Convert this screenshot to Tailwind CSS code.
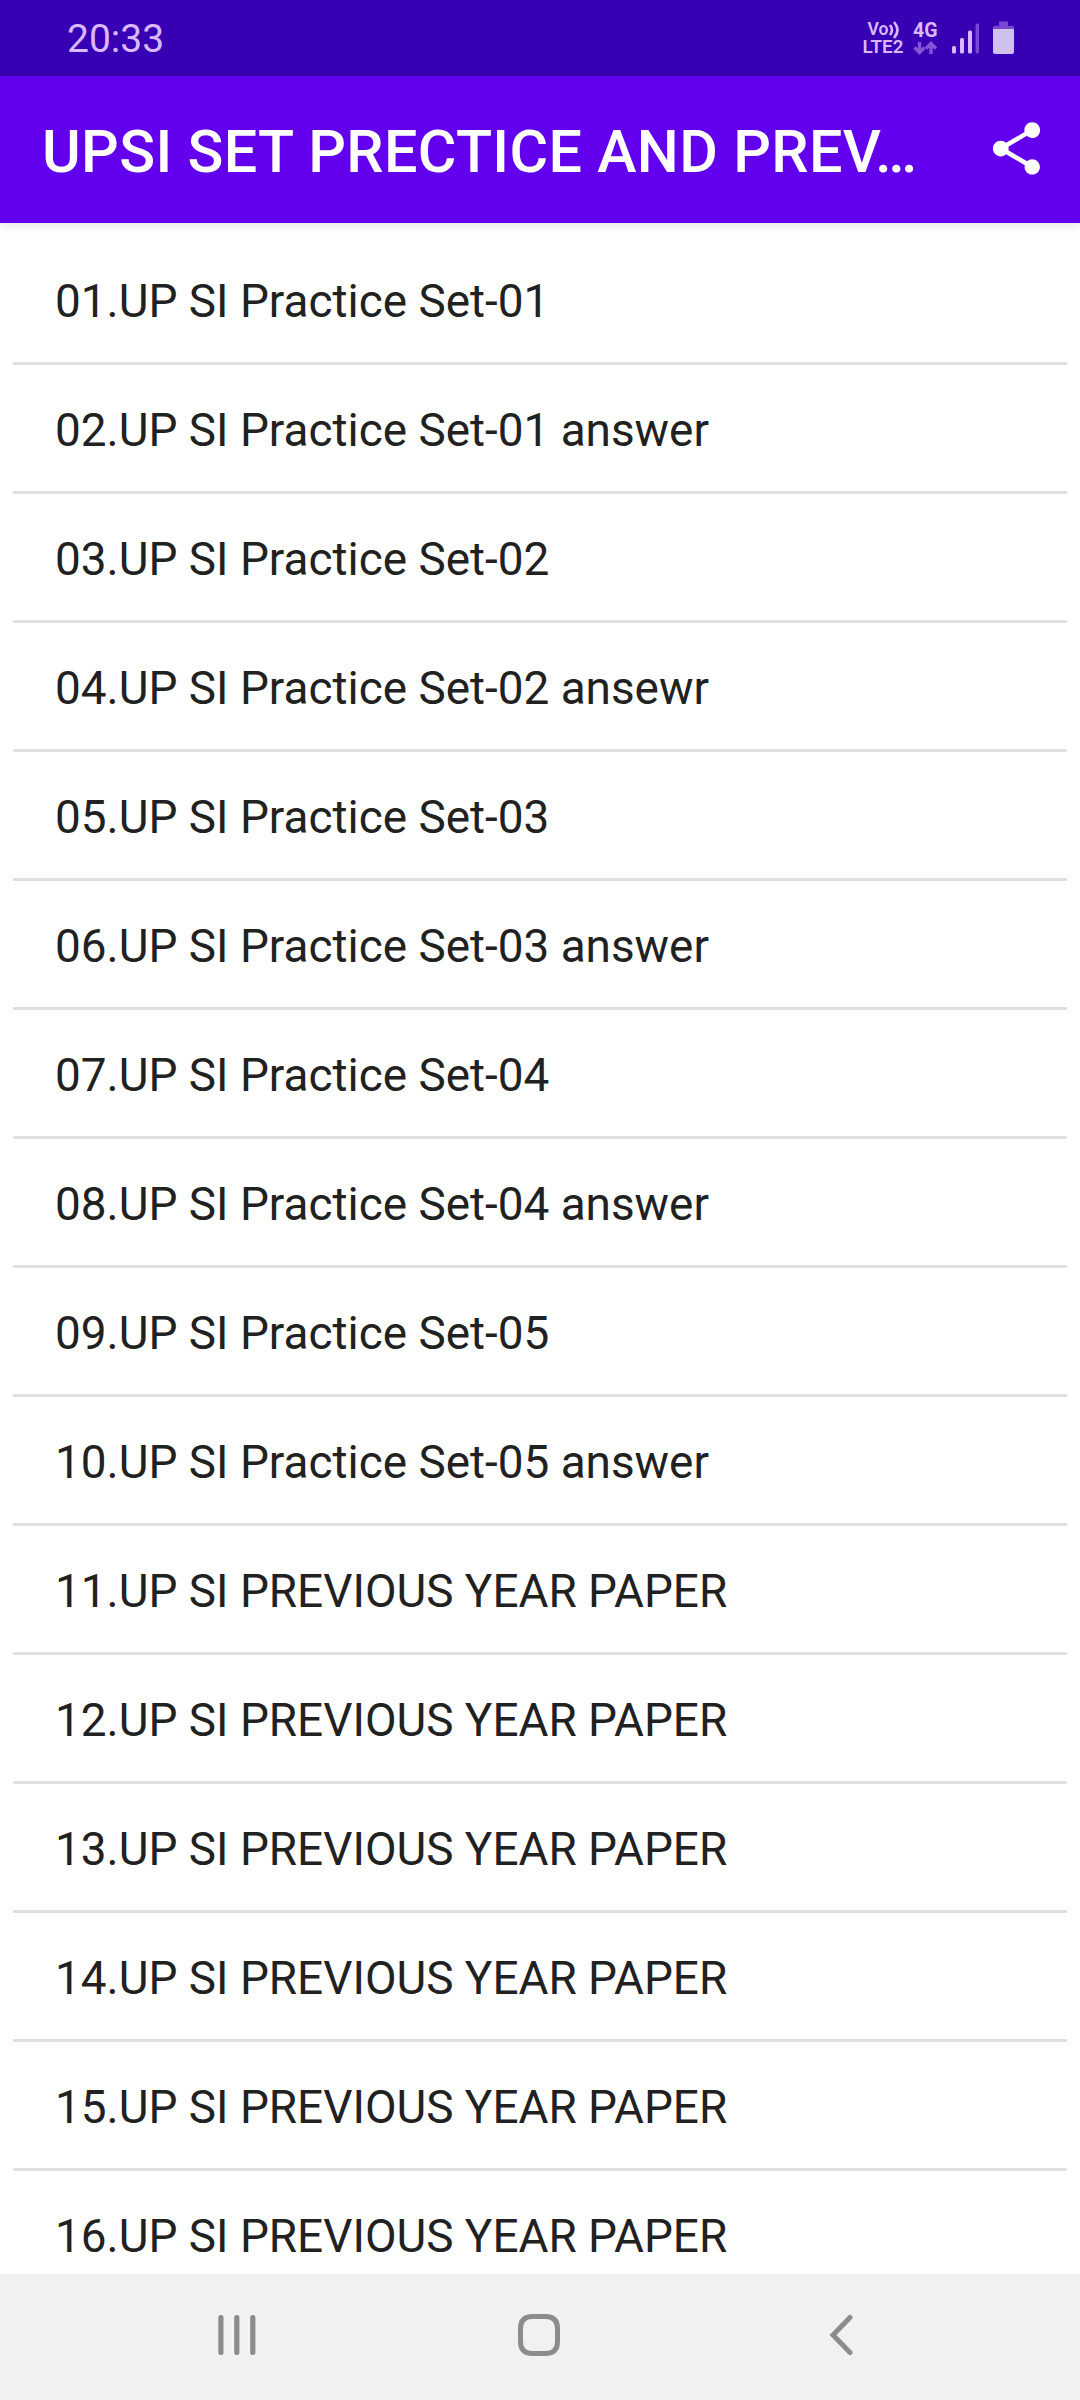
<!DOCTYPE html>
<html lang="en">
  <head>
    <meta charset="UTF-8" />
    <title>UPSI Set Practice</title>
    <meta name="viewport" content="width=device-width, initial-scale=1.0" />
    <script src="https://cdn.jsdelivr.net/npm/@tailwindcss/browser@4"></script>
  </head>
  <body class="bg-white font-['Roboto',sans-serif]">
    <div class="w-[1080px] h-[2400px] flex flex-col overflow-hidden">
      <!-- status bar -->
      <div class="h-[76px] shrink-0 bg-[#3700b3] text-[#d9b8ff] flex items-start justify-between pl-[67px] pr-[66px]">
        <span class="text-[39px] leading-[46px] pt-[16px]">20:33</span>
        <svg class="w-[152px] h-[76px]" viewBox="862 0 152 76" fill="#d9b8ff">
          <g font-family="Roboto, sans-serif" font-weight="700">
            <text x="867.5" y="35.3" font-size="18" font-weight="600" textLength="21" lengthAdjust="spacingAndGlyphs">Vo</text>
            <text x="862.5" y="53.2" font-size="18.5" font-weight="600" textLength="41" lengthAdjust="spacingAndGlyphs">LTE2</text>
            <text x="913" y="36.5" font-size="19.5" textLength="24.5" lengthAdjust="spacingAndGlyphs">4G</text>
          </g>
          <g fill="none" stroke="#d9b8ff" stroke-width="2.6">
            <path d="M890 25q4 5 0 10" />
            <path d="M894 22q7 8 0 16" />
          </g>
          <g fill="none" stroke="#8355d6" stroke-width="3.4">
            <path d="M919.5 42v10M914.5 47.5l5 5 5-5" />
            <path d="M931 54v-10M926 48.5l5-5 5 5" />
          </g>
          <rect x="952" y="46" width="4" height="7.5" rx="1.5" />
          <rect x="960" y="38" width="4" height="15.5" rx="1.5" />
          <rect x="968" y="30.5" width="4" height="23" rx="1.5" />
          <rect x="975.5" y="23.5" width="3.5" height="30" rx="1.5" fill="#7a48d0" />
          <path d="M999 26v-4.5h9V26h4.5q1.5 0 1.5 1.5V29h-21v-1.5q0-1.5 1.5-1.5z" fill="#7a48d0" />
          <path d="M993 29h21v23q0 2-2 2h-17q-2 0-2-2z" fill="#cfc0ec" />
        </svg>
      </div>

      <!-- app bar -->
      <header class="relative z-10 h-[147px] shrink-0 bg-[#6200ee] text-white flex items-center justify-between pl-[42px] pr-[32px] shadow-[0_2px_10px_rgba(0,0,0,0.12)]">
        <h1 class="text-[59.2px] leading-[68px] tracking-[0.35px] font-medium whitespace-nowrap pt-[4px]">UPSI SET PRECTICE AND PREV…</h1>
        <svg class="w-[63px] h-[63px] shrink-0 -mt-[2px]" viewBox="0 0 24 24" fill="currentColor">
          <path d="M18 16.08c-.76 0-1.44.3-1.96.77L8.91 12.7c.05-.23.09-.46.09-.7s-.04-.47-.09-.7l7.05-4.11c.54.5 1.25.81 2.04.81 1.66 0 3-1.34 3-3s-1.34-3-3-3-3 1.34-3 3c0 .24.04.47.09.7L8.04 9.81C7.5 9.31 6.79 9 6 9c-1.66 0-3 1.34-3 3s1.34 3 3 3c.79 0 1.5-.31 2.04-.81l7.12 4.16c-.05.21-.08.43-.08.65 0 1.61 1.31 2.92 2.92 2.92 1.61 0 2.92-1.31 2.92-2.92s-1.31-2.92-2.92-2.92z" />
        </svg>
      </header>

      <!-- paper list -->
      <main class="flex-1 min-h-0 overflow-hidden p-[13px] text-[45.9px] text-[#212121]">
        <ul id="list" class="divide-y-[3px] divide-[#e0e0e0]"></ul>
      </main>

      <!-- navigation bar -->
      <nav class="h-[126px] shrink-0 bg-[#f1f1f1] flex items-center justify-between pl-[216px] pr-[218px] pb-[4px]">
        <svg class="w-[42px] h-[42px]" viewBox="0 0 42 42" fill="#8c8c8c">
          <rect x="2.3" y="1" width="5.2" height="40" rx="2.5" />
          <rect x="18.2" y="1" width="5.2" height="40" rx="2.5" />
          <rect x="34.2" y="1" width="5.2" height="40" rx="2.5" />
        </svg>
        <svg class="w-[42px] h-[42px]" viewBox="0 0 42 42" fill="none" stroke="#8c8c8c" stroke-width="5">
          <path d="M14.5 2.5h13q12 0 12 12v13q0 12-12 12h-13q-12 0-12-12v-13q0-12 12-12z" />
        </svg>
        <svg class="w-[42px] h-[42px]" viewBox="0 0 42 42" fill="none" stroke="#8c8c8c" stroke-width="5" stroke-linecap="round">
          <path d="M30 3.5L13 21l17 17.5" />
        </svg>
      </nav>
    </div>

    <script>
      const items = [
        "01.UP SI Practice Set-01",
        "02.UP SI Practice Set-01 answer",
        "03.UP SI Practice Set-02",
        "04.UP SI Practice Set-02 ansewr",
        "05.UP SI Practice Set-03",
        "06.UP SI Practice Set-03 answer",
        "07.UP SI Practice Set-04",
        "08.UP SI Practice Set-04 answer",
        "09.UP SI Practice Set-05",
        "10.UP SI Practice Set-05 answer",
        "11.UP SI PREVIOUS YEAR PAPER",
        "12.UP SI PREVIOUS YEAR PAPER",
        "13.UP SI PREVIOUS YEAR PAPER",
        "14.UP SI PREVIOUS YEAR PAPER",
        "15.UP SI PREVIOUS YEAR PAPER",
        "16.UP SI PREVIOUS YEAR PAPER",
      ];

      document.getElementById("list").innerHTML = items
        .map((item) => `<li class="h-[129px] px-[42px] pt-[2px] leading-[126px] whitespace-nowrap">${item}</li>`)
        .join("");
    </script>
  </body>
</html>
